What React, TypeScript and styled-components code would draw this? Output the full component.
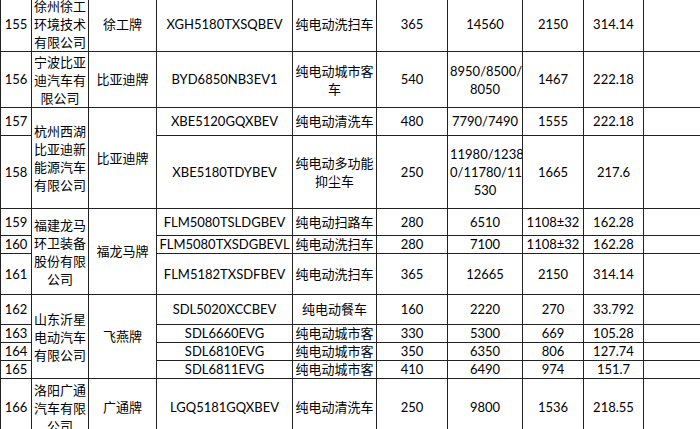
import React from "react";
import styled, { createGlobalStyle } from "styled-components";

const Global = createGlobalStyle`
  html, body { margin: 0; padding: 0; background: #ffffff; }
  body { width: 700px; height: 429px; overflow: hidden; }
`;

const Viewport = styled.div`
  width: 700px;
  height: 429px;
  overflow: hidden;
  background: #ffffff;
`;

const Table = styled.table`
  margin-top: -4px;
  border-collapse: collapse;
  table-layout: fixed;
  width: 723px;
  font-family: "Lato", "Noto Sans CJK SC", sans-serif;
  font-size: 13px;
  color: #000000;
`;

const Row = styled.tr<{ $h: number }>`
  height: ${(p) => p.$h}px;
`;

const Cell = styled.td<{ $lh?: number }>`
  border: 1px solid #222222;
  padding: 0 2px;
  text-align: center;
  vertical-align: middle;
  line-height: ${(p) => p.$lh ?? 17}px;
  white-space: nowrap;
  overflow: hidden;
`;

const Line = styled.span`
  display: block;
`;

type Group = { lines: string[]; span: number };

type RowData = {
  no: string;
  company?: Group;
  brand?: Group;
  model: string;
  type: string[];
  mass: string;
  dims: string[];
  weight: string;
  cap: string;
  h: number;
};

const rows: RowData[] = [
  {
    no: "155",
    company: { lines: ["徐州徐工", "环境技术", "有限公司"], span: 1 },
    brand: { lines: ["徐工牌"], span: 1 },
    model: "XGH5180TXSQBEV",
    type: ["纯电动洗扫车"],
    mass: "365",
    dims: ["14560"],
    weight: "2150",
    cap: "314.14",
    h: 54,
  },
  {
    no: "156",
    company: { lines: ["宁波比亚", "迪汽车有", "限公司"], span: 1 },
    brand: { lines: ["比亚迪牌"], span: 1 },
    model: "BYD6850NB3EV1",
    type: ["纯电动城市客", "车"],
    mass: "540",
    dims: ["8950/8500/", "8050"],
    weight: "1467",
    cap: "222.18",
    h: 56,
  },
  {
    no: "157",
    company: { lines: ["杭州西湖", "比亚迪新", "能源汽车", "有限公司"], span: 2 },
    brand: { lines: ["比亚迪牌"], span: 2 },
    model: "XBE5120GQXBEV",
    type: ["纯电动清洗车"],
    mass: "480",
    dims: ["7790/7490"],
    weight: "1555",
    cap: "222.18",
    h: 28,
  },
  {
    no: "158",
    model: "XBE5180TDYBEV",
    type: ["纯电动多功能", "抑尘车"],
    mass: "250",
    dims: ["11980/1238", "0/11780/11", "530"],
    weight: "1665",
    cap: "217.6",
    h: 73,
  },
  {
    no: "159",
    company: { lines: ["福建龙马", "环卫装备", "股份有限", "公司"], span: 3 },
    brand: { lines: ["福龙马牌"], span: 3 },
    model: "FLM5080TSLDGBEV",
    type: ["纯电动扫路车"],
    mass: "280",
    dims: ["6510"],
    weight: "1108±32",
    cap: "162.28",
    h: 27,
  },
  {
    no: "160",
    model: "FLM5080TXSDGBEVL",
    type: ["纯电动洗扫车"],
    mass: "280",
    dims: ["7100"],
    weight: "1108±32",
    cap: "162.28",
    h: 18,
  },
  {
    no: "161",
    model: "FLM5182TXSDFBEV",
    type: ["纯电动洗扫车"],
    mass: "365",
    dims: ["12665"],
    weight: "2150",
    cap: "314.14",
    h: 41,
  },
  {
    no: "162",
    company: { lines: ["山东沂星", "电动汽车", "有限公司"], span: 4 },
    brand: { lines: ["飞燕牌"], span: 4 },
    model: "SDL5020XCCBEV",
    type: ["纯电动餐车"],
    mass: "160",
    dims: ["2220"],
    weight: "270",
    cap: "33.792",
    h: 30,
  },
  {
    no: "163",
    model: "SDL6660EVG",
    type: ["纯电动城市客"],
    mass: "330",
    dims: ["5300"],
    weight: "669",
    cap: "105.28",
    h: 18,
  },
  {
    no: "164",
    model: "SDL6810EVG",
    type: ["纯电动城市客"],
    mass: "350",
    dims: ["6350"],
    weight: "806",
    cap: "127.74",
    h: 18,
  },
  {
    no: "165",
    model: "SDL6811EVG",
    type: ["纯电动城市客"],
    mass: "410",
    dims: ["6490"],
    weight: "974",
    cap: "151.7",
    h: 18,
  },
  {
    no: "166",
    company: { lines: ["洛阳广通", "汽车有限", "公司"], span: 1 },
    brand: { lines: ["广通牌"], span: 1 },
    model: "LGQ5181GQXBEV",
    type: ["纯电动清洗车"],
    mass: "250",
    dims: ["9800"],
    weight: "1536",
    cap: "218.55",
    h: 58,
  },
];

const widths = [31, 57, 68, 136, 84, 71, 75, 61, 60, 80];

const Lines: React.FC<{ items: string[] }> = ({ items }) =>
  items.length === 1 ? <>{items[0]}</> : <>{items.map((t, i) => <Line key={i}>{t}</Line>)}</>;

export default function App() {
  return (
    <Viewport>
      <Global />
      <Table>
        <colgroup>
          {widths.map((w, i) => (
            <col key={i} style={{ width: w }} />
          ))}
        </colgroup>
        <tbody>
          {rows.map((r) => (
            <Row key={r.no} $h={r.h}>
              <Cell>{r.no}</Cell>
              {r.company && (
                <Cell rowSpan={r.company.span} $lh={18}>
                  <Lines items={r.company.lines} />
                </Cell>
              )}
              {r.brand && (
                <Cell rowSpan={r.brand.span}>
                  <Lines items={r.brand.lines} />
                </Cell>
              )}
              <Cell>{r.model}</Cell>
              <Cell $lh={r.type.length > 1 ? 18 : 17}>
                <Lines items={r.type} />
              </Cell>
              <Cell>{r.mass}</Cell>
              <Cell $lh={r.dims.length > 1 ? 18 : 17}>
                <Lines items={r.dims} />
              </Cell>
              <Cell>{r.weight}</Cell>
              <Cell>{r.cap}</Cell>
              <Cell />
            </Row>
          ))}
        </tbody>
      </Table>
    </Viewport>
  );
}
